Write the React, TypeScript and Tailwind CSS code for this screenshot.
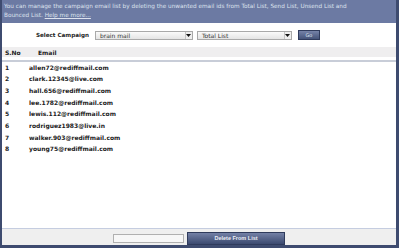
import React from "react";

const emails = [
  "allen72@rediffmail.com",
  "clark.12345@live.com",
  "hall.656@rediffmail.com",
  "lee.1782@rediffmail.com",
  "lewis.112@rediffmail.com",
  "rodriguez1983@live.in",
  "walker.903@rediffmail.com",
  "young75@rediffmail.com",
];

const FakeSelect: React.FC<{ label: string; width: string }> = ({ label, width }) => (
  <div
    className={`${width} h-[9px] flex items-center border border-[#a9a9a9] bg-gradient-to-b from-[#fafafa] to-[#e4e4e4]`}
  >
    <span className="flex-1 pl-[4px] text-[6px] leading-[7px] text-[#333]">{label}</span>
    <span className="w-[7px] h-full flex items-center justify-center border-l border-[#c4c4c4] bg-[#eee]">
      <svg width="5" height="3" viewBox="0 0 5 3">
        <path d="M0 0h5L2.5 3z" fill="#111" />
      </svg>
    </span>
  </div>
);

const App: React.FC = () => {
  return (
    <div className="w-[399px] h-[248px] flex flex-col bg-white border-l-2 border-r-[3px] border-b-[3px] border-[#3e4b6f] font-['DejaVu_Sans',Verdana,sans-serif]">
      {/* Info Header */}
      <div className="h-[23px] shrink-0 bg-[#6c7aa3] px-[2px] pt-[2px] text-[5.75px] leading-[9px] text-[#dde2ee]">
        You can manage the campaign email list by deleting the unwanted email ids from Total List, Send List, Unsend List and
        <br />
        Bounced List. <span className="underline">Help me more...</span>
      </div>

      {/* Campaign Select */}
      <div className="flex items-center mt-[7px] h-[10px] pl-[34px]">
        <span className="text-[5.6px] font-bold text-[#222] mr-[6px]">Select Campaign</span>
        <FakeSelect label="brain mail" width="w-[98px]" />
        <div className="w-[4px]" />
        <FakeSelect label="Total List" width="w-[95px]" />
        <button className="ml-[6px] w-[22px] h-[10px] flex items-center justify-center border border-[#2f3b5c] bg-gradient-to-b from-[#7683a8] to-[#45547a] text-[5px] leading-none text-[#dfe4f0]">
          Go
        </button>
      </div>

      {/* Table Header */}
      <div className="mt-[7px] h-[10px] flex items-center bg-[#efeeef] text-[6px] font-bold text-[#222]">
        <span className="w-[36px] pl-[3px]">S.No</span>
        <span>Email</span>
      </div>
      <div className="mt-[3px] h-[1.5px] bg-[#c8cdd8]" />

      {/* Rows */}
      <div className="flex-1">
        {emails.map((email, i) => (
          <div key={email} className="flex h-[11.67px] items-center text-[6px] font-bold text-[#222]">
            <span className="w-[27px] pl-[3px]">{i + 1}</span>
            <span>{email}</span>
          </div>
        ))}
      </div>

      {/* Bottom Bar */}
      <div className="h-[17px] shrink-0 flex items-end justify-center gap-[3px] border-t border-[#c5cde0] bg-[#efefef]">
        <div className="mb-[2px] w-[71px] h-[9px] border border-[#b0b0b0] bg-[#f7f7f7]" />
        <button className="w-[98px] h-[13px] flex items-center justify-center border border-[#2f3b5c] bg-gradient-to-b from-[#7481a6] to-[#3c4a70] font-['Liberation_Sans',Arial,sans-serif] text-[5.5px] font-bold text-[#eef0f6]">
          Delete From List
        </button>
      </div>
    </div>
  );
};

export default App;
